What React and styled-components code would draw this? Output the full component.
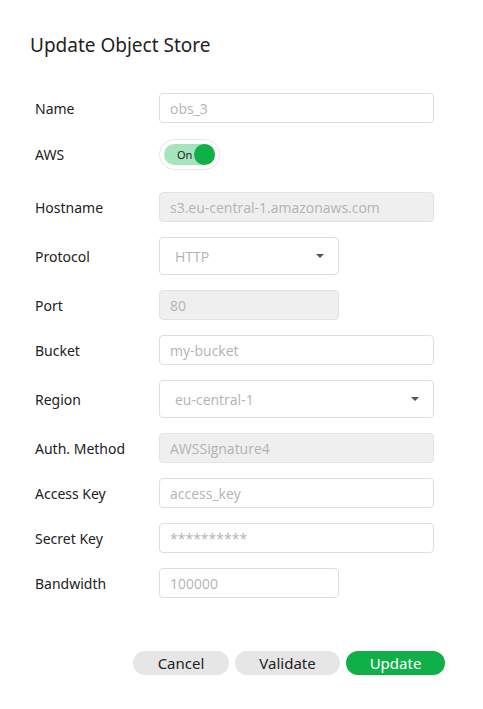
import React from "react";
import styled, { createGlobalStyle } from "styled-components";

const GlobalStyle = createGlobalStyle`
	body {
		margin: 0;
		background: #fff;
		font-family: "Noto Sans", "Open Sans", sans-serif;
		color: #222;
	}
`;

const Dialog = styled.div`
	width: 483px;
	height: 709px;
	box-sizing: border-box;
	padding: 30px 38px 0 30px;
	display: flex;
	flex-direction: column;
`;

const Title = styled.h1`
	margin: 0;
	font-size: 19px;
	font-weight: 400;
	line-height: 30px;
	color: #222;
`;

const Form = styled.div`
	display: flex;
	flex-direction: column;
	gap: 15px;
	margin-top: 33px;
	padding-left: 5px;
`;

const Row = styled.div`
	display: flex;
	align-items: center;
	padding-bottom: ${(p) => (p.$extra ? "7px" : "0")};
	min-height: ${(p) => (p.$extra ? "32px" : "auto")};
`;

const Label = styled.label`
	width: 124px;
	flex-shrink: 0;
	font-size: 14px;
	color: #222;
`;

const Input = styled.div`
	box-sizing: border-box;
	width: ${(p) => (p.$short ? "180px" : "275px")};
	height: 30px;
	padding: 0 10px;
	display: flex;
	align-items: center;
	border: 1px solid ${(p) => (p.$disabled ? "#e3e3e3" : "#dedede")};
	border-radius: 4px;
	background: ${(p) => (p.$disabled ? "#efefef" : "#fff")};
	font-family: "Open Sans", sans-serif;
	font-size: 14px;
	color: #b3b3b3;
`;

const Select = styled.div`
	box-sizing: border-box;
	width: ${(p) => (p.$short ? "180px" : "275px")};
	height: 38px;
	padding: 0 14px 0 15px;
	display: flex;
	align-items: center;
	justify-content: space-between;
	border: 1px solid #dedede;
	border-radius: 4px;
	background: #fff;
	font-family: "Open Sans", sans-serif;
	font-size: 14px;
	color: #b3b3b3;
`;

const Caret = styled.span`
	width: 0;
	height: 0;
	border-left: 4px solid transparent;
	border-right: 4px solid transparent;
	border-top: 4px solid #555;
`;

const ToggleOuter = styled.div`
	box-sizing: border-box;
	width: 61px;
	height: 31px;
	padding: 4px;
	border: 1px solid #e6e6e6;
	border-radius: 16px;
	background: #fff;
	display: flex;
`;

const ToggleTrack = styled.div`
	flex: 1;
	border-radius: 11px;
	background: #a5e4bd;
	display: flex;
	align-items: center;
	justify-content: space-between;
	padding-left: 13px;
`;

const ToggleText = styled.span`
	font-size: 11px;
	color: #222;
`;

const Knob = styled.span`
	width: 21px;
	height: 21px;
	border-radius: 50%;
	background: #10b049;
`;

const Buttons = styled.div`
	display: flex;
	justify-content: flex-end;
	gap: 6px;
	margin-top: 53px;
`;

const Button = styled.button`
	box-sizing: border-box;
	width: ${(p) => p.$w}px;
	height: 24px;
	border: none;
	border-radius: 12px;
	background: ${(p) => (p.$primary ? "#10b049" : "#e6e6e6")};
	color: ${(p) => (p.$primary ? "#fff" : "#222")};
	font-family: "Noto Sans", sans-serif;
	font-size: 15px;
	padding: 0;
`;

const fields = [
	{ label: "Name", type: "input", value: "obs_3" },
	{ label: "AWS", type: "toggle" },
	{ label: "Hostname", type: "input", value: "s3.eu-central-1.amazonaws.com", disabled: true },
	{ label: "Protocol", type: "select", value: "HTTP", short: true },
	{ label: "Port", type: "input", value: "80", disabled: true, short: true },
	{ label: "Bucket", type: "input", value: "my-bucket" },
	{ label: "Region", type: "select", value: "eu-central-1" },
	{ label: "Auth. Method", type: "input", value: "AWSSignature4", disabled: true },
	{ label: "Access Key", type: "input", value: "access_key" },
	{ label: "Secret Key", type: "input", value: "**********" },
	{ label: "Bandwidth", type: "input", value: "100000", short: true },
];

const App = () => {
	return (
		<>
			<GlobalStyle />
			<Dialog>
				<Title>Update Object Store</Title>
				<Form>
					{fields.map((f) => (
						<Row key={f.label} $extra={f.type === "toggle"}>
							<Label>{f.label}</Label>
							{f.type === "input" && (
								<Input $disabled={f.disabled} $short={f.short}>
									{f.value}
								</Input>
							)}
							{f.type === "select" && (
								<Select $short={f.short}>
									{f.value}
									<Caret />
								</Select>
							)}
							{f.type === "toggle" && (
								<ToggleOuter>
									<ToggleTrack>
										<ToggleText>On</ToggleText>
										<Knob />
									</ToggleTrack>
								</ToggleOuter>
							)}
						</Row>
					))}
				</Form>
				<Buttons>
					<Button $w={96}>Cancel</Button>
					<Button $w={105}>Validate</Button>
					<Button $w={99} $primary>
						Update
					</Button>
				</Buttons>
			</Dialog>
		</>
	);
};

export default App;
